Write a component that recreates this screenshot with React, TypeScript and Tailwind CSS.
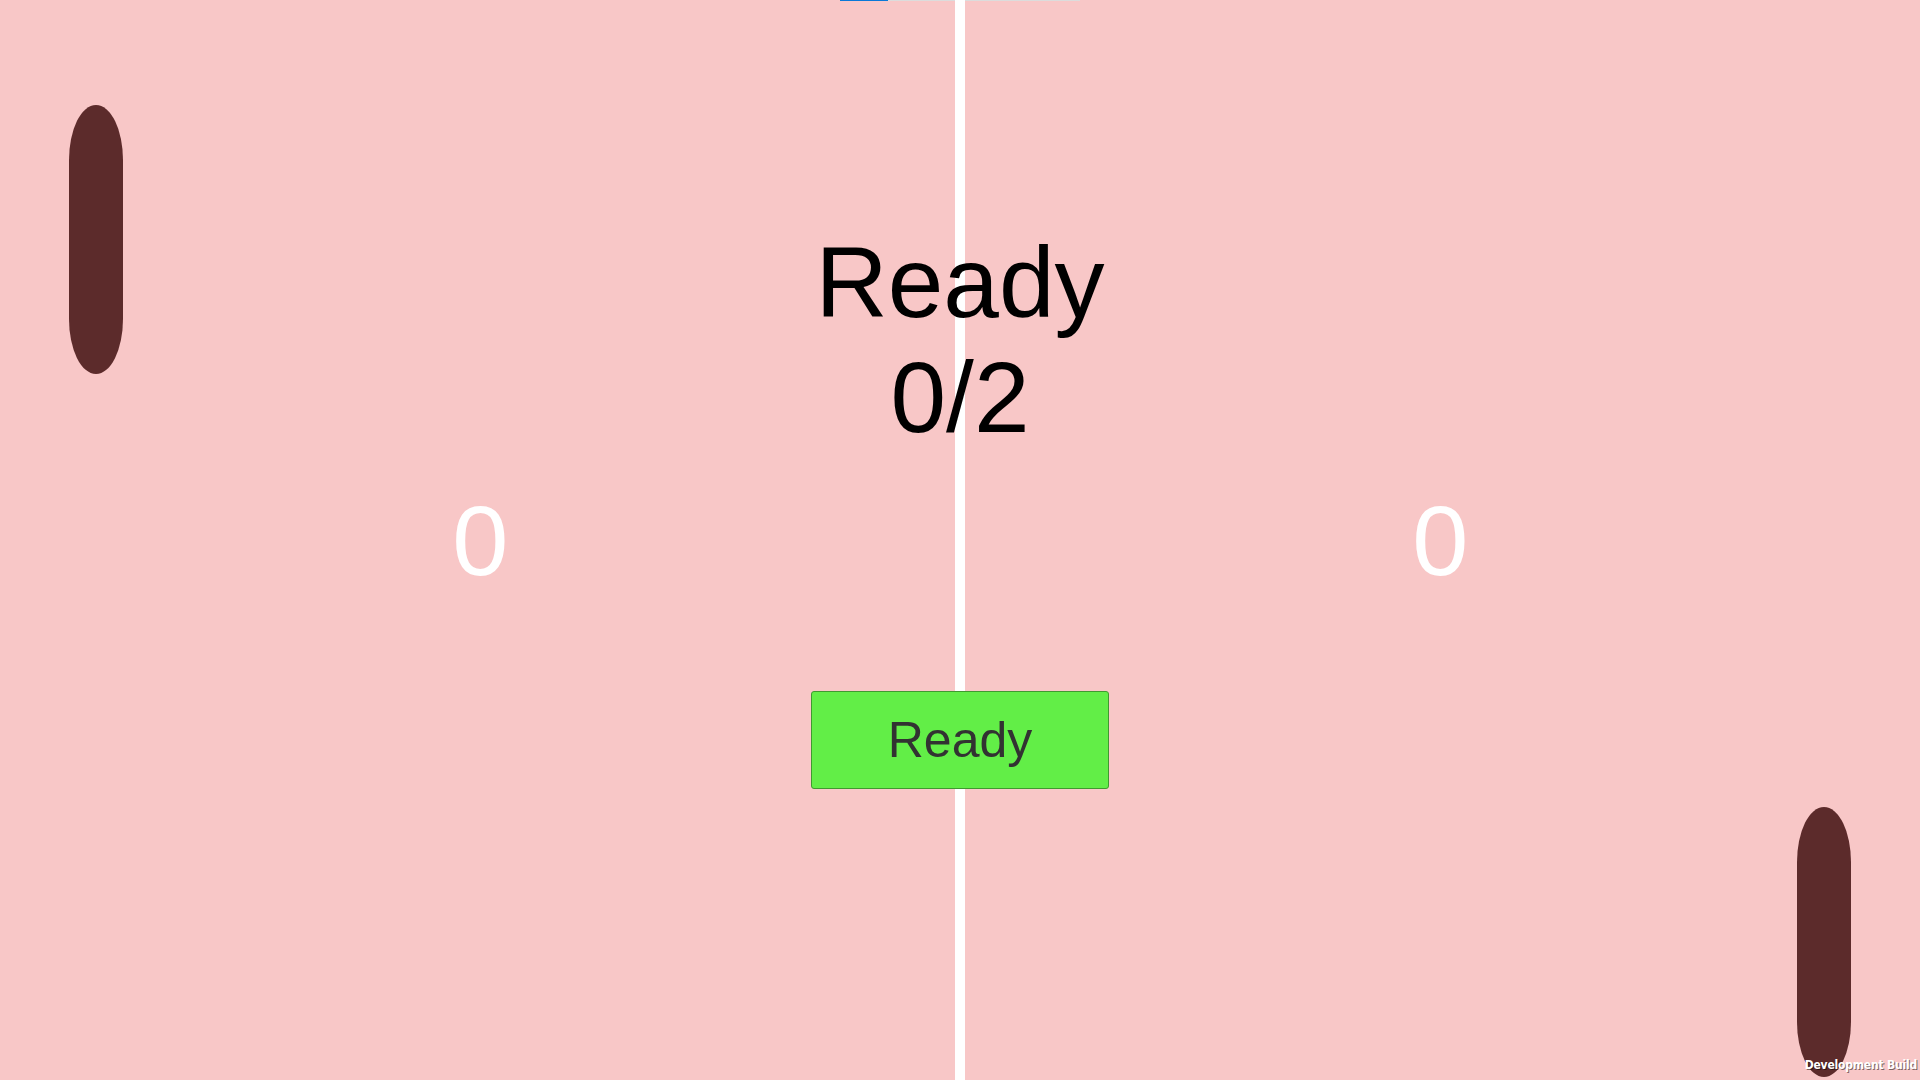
import React from "react";

export default function App() {
  return (
    <div className="relative w-[1920px] h-[1080px] overflow-hidden bg-[#f8c7c7]" style={{ fontFamily: '"Liberation Sans", Arial, sans-serif' }}>
      {/* top loading bar */}
      <div className="absolute left-[840px] top-0 h-[1px] w-[240px] flex">
        <div className="w-[48px] h-full bg-[#0a78d7]" />
        <div className="flex-1 h-full bg-[#dcdcdc]" />
      </div>

      {/* center net */}
      <div className="absolute left-[955px] top-0 w-[10px] h-full bg-white" />

      {/* paddles (free canvas objects) */}
      <div className="absolute left-[69px] top-[105px] w-[54px] h-[269px] bg-[#5c2b2b] rounded-[27px/55px]" />
      <div className="absolute left-[1797px] top-[807px] w-[54px] h-[270px] bg-[#5c2b2b] rounded-[27px/55px]" />

      {/* UI overlay */}
      <div className="absolute inset-0 flex flex-col items-center pt-[225px]">
        <div className="flex flex-col items-center text-black text-[100px] leading-[115px]">
          <div>Ready</div>
          <div>0/2</div>
        </div>

        <div className="mt-[37px] w-full grid grid-cols-2 text-white text-[98px] leading-[98px]">
          <div className="flex justify-center"><span className="inline-block scale-x-[1.03]">0</span></div>
          <div className="flex justify-center"><span className="inline-block scale-x-[1.03]">0</span></div>
        </div>

        <button className="mt-[101px] w-[298px] h-[98px] bg-[#62ee47] border border-[#3f9a30] rounded-[3px] flex items-center justify-center">
          <span className="text-[#323232] text-[50px] leading-none">Ready</span>
        </button>
      </div>

      {/* development build */}
      <div
        className="absolute right-[3px] bottom-[9px] text-white text-[12px] font-bold leading-none tracking-[-0.2px]"
        style={{ fontFamily: '"DejaVu Sans Condensed", "DejaVu Sans", sans-serif', textShadow: "1px 1px 0 rgba(0,0,0,0.5)" }}
      >
        Development Build
      </div>
    </div>
  );
}
